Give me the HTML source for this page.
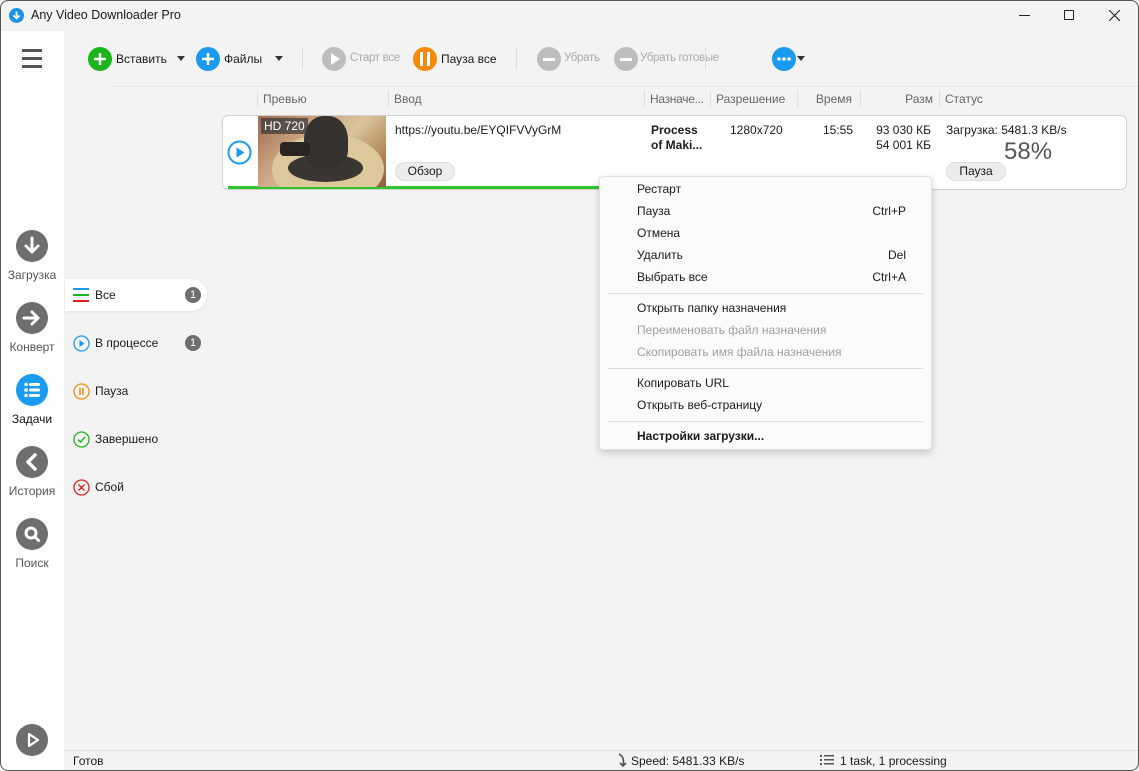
<!DOCTYPE html>
<html><head><meta charset="utf-8"><style>
*{box-sizing:border-box;margin:0;padding:0}
body{width:1139px;height:771px;overflow:hidden;background:#f3f3f3;font-family:"Liberation Sans",sans-serif;font-size:12px;color:#1a1a1a;position:relative}
.a{position:absolute;white-space:nowrap}
.win{position:absolute;left:0;top:0;width:1139px;height:771px;overflow:hidden;background:#f3f3f3}
.frame{position:absolute;left:0;top:0;width:1139px;height:771px;border:1px solid #555;border-radius:8px;pointer-events:none}
.circ{position:absolute;border-radius:50%}
.mi{position:absolute;left:37px;font-size:12px}
.sc{position:absolute;right:25px;font-size:12px}
.sep{position:absolute;left:8px;right:8px;height:1px;background:#dcdcdc}
.hdr{position:absolute;top:90px;height:18px;border-left:1px solid #e0e0e0;color:#666;font-size:12px;padding-left:5px;line-height:18px}
.dis{color:#aaa;font-size:11.5px;letter-spacing:-0.3px}
</style></head><body>
<div class="win">
<div class="circ" style="left:9px;top:8px;width:15px;height:15px;background:#1e90e8"></div>
<svg class="a" style="left:9px;top:8px" width="15" height="15"><path d="M7.5 3.5v7M4.5 7.5l3 3 3-3" stroke="#fff" stroke-width="1.8" fill="none"/></svg>
<div class="a" style="left:31px;top:8px;font-size:12.5px">Any Video Downloader Pro</div>
<div class="a" style="left:1019px;top:15px;width:11px;height:1px;background:#222"></div>
<div class="a" style="left:1064px;top:10px;width:10px;height:10px;border:1px solid #222;border-radius:1px"></div>
<svg class="a" style="left:1109px;top:10px" width="11" height="11"><path d="M0 0L11 11M11 0L0 11" stroke="#222" stroke-width="1.1"/></svg>

<div class="a" style="left:0;top:31px;width:64px;height:740px;background:#fff"></div>
<div class="a" style="left:22px;top:49px;width:20px;height:3px;background:#555"></div>
<div class="a" style="left:22px;top:57px;width:20px;height:3px;background:#555"></div>
<div class="a" style="left:22px;top:65px;width:20px;height:3px;background:#555"></div>

<div class="circ" style="left:16px;top:230px;width:32px;height:32px;background:#6e6e6e"></div>
<svg class="a" style="left:16px;top:230px" width="32" height="32"><path d="M16 8v14M10 16l6 6 6-6" stroke="#fff" stroke-width="3" fill="none" stroke-linecap="round" stroke-linejoin="round"/></svg>
<div class="a" style="left:0;top:268px;width:64px;text-align:center;color:#555">Загрузка</div>
<div class="circ" style="left:16px;top:302px;width:32px;height:32px;background:#6e6e6e"></div>
<svg class="a" style="left:16px;top:302px" width="32" height="32"><path d="M8 16h14M16 10l6 6-6 6" stroke="#fff" stroke-width="3" fill="none" stroke-linecap="round" stroke-linejoin="round"/></svg>
<div class="a" style="left:0;top:340px;width:64px;text-align:center;color:#555">Конверт</div>
<div class="circ" style="left:16px;top:374px;width:32px;height:32px;background:#1a9af0"></div>
<svg class="a" style="left:16px;top:374px" width="32" height="32"><g fill="#fff"><circle cx="10" cy="10.5" r="1.8"/><circle cx="10" cy="16" r="1.8"/><circle cx="10" cy="21.5" r="1.8"/><rect x="13" y="9" width="11" height="3" rx="1.5"/><rect x="13" y="14.5" width="11" height="3" rx="1.5"/><rect x="13" y="20" width="11" height="3" rx="1.5"/></g></svg>
<div class="a" style="left:0;top:412px;width:64px;text-align:center;color:#111">Задачи</div>
<div class="circ" style="left:16px;top:446px;width:32px;height:32px;background:#6e6e6e"></div>
<svg class="a" style="left:16px;top:446px" width="32" height="32"><path d="M19 9l-7 7 7 7" stroke="#fff" stroke-width="3.5" fill="none" stroke-linecap="round" stroke-linejoin="round"/></svg>
<div class="a" style="left:0;top:484px;width:64px;text-align:center;color:#555">История</div>
<div class="circ" style="left:16px;top:518px;width:32px;height:32px;background:#6e6e6e"></div>
<svg class="a" style="left:16px;top:518px" width="32" height="32"><circle cx="15" cy="15" r="5" stroke="#fff" stroke-width="3" fill="none"/><path d="M18.5 18.5l4 4" stroke="#fff" stroke-width="3" stroke-linecap="round"/></svg>
<div class="a" style="left:0;top:556px;width:64px;text-align:center;color:#555">Поиск</div>
<div class="circ" style="left:16px;top:724px;width:32px;height:32px;background:#6e6e6e"></div>
<svg class="a" style="left:16px;top:724px" width="32" height="32"><path d="M13 10l9 6-9 6z" stroke="#fff" stroke-width="2.2" fill="none" stroke-linejoin="round"/></svg>

<div class="circ" style="left:88px;top:47px;width:24px;height:24px;background:#1cb61c"></div>
<svg class="a" style="left:88px;top:47px" width="24" height="24"><path d="M12 6v12M6 12h12" stroke="#fff" stroke-width="2.5"/></svg>
<div class="a" style="left:116px;top:52px">Вставить</div>
<svg class="a" style="left:177px;top:56px" width="9" height="6"><path d="M0 0h8L4 5z" fill="#333"/></svg>
<div class="circ" style="left:196px;top:47px;width:24px;height:24px;background:#1a9af0"></div>
<svg class="a" style="left:196px;top:47px" width="24" height="24"><path d="M12 6v12M6 12h12" stroke="#fff" stroke-width="2.5"/></svg>
<div class="a" style="left:224px;top:52px">Файлы</div>
<svg class="a" style="left:275px;top:56px" width="9" height="6"><path d="M0 0h8L4 5z" fill="#333"/></svg>
<div class="a" style="left:302px;top:48px;width:1px;height:22px;background:#ddd"></div>
<div class="circ" style="left:322px;top:47px;width:24px;height:24px;background:#bdbdbd"></div>
<svg class="a" style="left:322px;top:47px" width="24" height="24"><path d="M9 6l9 6-9 6z" fill="#fff"/></svg>
<div class="a dis" style="left:350px;top:52px">Старт все</div>
<div class="circ" style="left:413px;top:47px;width:24px;height:24px;background:#f58a0a"></div>
<div class="a" style="left:420px;top:52px;width:3px;height:14px;background:#fff"></div>
<div class="a" style="left:427px;top:52px;width:3px;height:14px;background:#fff"></div>
<div class="a" style="left:441px;top:52px">Пауза все</div>
<div class="a" style="left:516px;top:48px;width:1px;height:22px;background:#ddd"></div>
<div class="circ" style="left:537px;top:47px;width:24px;height:24px;background:#bdbdbd"></div>
<div class="a" style="left:543px;top:58px;width:12px;height:3px;background:#fff"></div>
<div class="a dis" style="left:564px;top:52px">Убрать</div>
<div class="circ" style="left:614px;top:47px;width:24px;height:24px;background:#bdbdbd"></div>
<div class="a" style="left:620px;top:58px;width:12px;height:3px;background:#fff"></div>
<div class="a dis" style="left:640px;top:52px">Убрать готовые</div>
<div class="a" style="left:705px;top:48px;width:1px;height:22px;background:#ddd"></div>
<div class="circ" style="left:772px;top:47px;width:24px;height:24px;background:#1a9af0"></div>
<svg class="a" style="left:772px;top:47px" width="24" height="24"><g fill="#fff"><circle cx="7" cy="12" r="1.8"/><circle cx="12" cy="12" r="1.8"/><circle cx="17" cy="12" r="1.8"/></g></svg>
<svg class="a" style="left:797px;top:56px" width="9" height="6"><path d="M0 0h8L4 5z" fill="#333"/></svg>
<div class="a" style="left:112px;top:86px;width:1027px;height:1px;background:#e6e6e6"></div>

<div class="a" style="left:65px;top:279px;width:142px;height:32px;background:#fff;border-radius:0 16px 16px 0;box-shadow:0 1px 2px rgba(0,0,0,.08)"></div>
<div class="a" style="left:73px;top:288px;width:16px;height:2px;background:#1a9af0"></div>
<div class="a" style="left:73px;top:294px;width:16px;height:2px;background:#1cb61c"></div>
<div class="a" style="left:73px;top:300px;width:16px;height:2px;background:#e02020"></div>
<div class="a" style="left:95px;top:288px">Все</div>
<div class="circ" style="left:185px;top:287px;width:16px;height:16px;background:#6e6e6e;color:#fff;font-size:11px;text-align:center;line-height:16px">1</div>
<svg class="a" style="left:73px;top:335px" width="17" height="17"><circle cx="8.5" cy="8.5" r="7.5" stroke="#1a9af0" stroke-width="1.3" fill="none"/><path d="M6.5 5l5 3.5-5 3.5z" fill="#1a9af0"/></svg>
<div class="a" style="left:95px;top:336px">В процессе</div>
<div class="circ" style="left:185px;top:335px;width:16px;height:16px;background:#6e6e6e;color:#fff;font-size:11px;text-align:center;line-height:16px">1</div>
<svg class="a" style="left:73px;top:383px" width="17" height="17"><circle cx="8.5" cy="8.5" r="7.5" stroke="#f58a0a" stroke-width="1.3" fill="none"/><path d="M7 5v7M10 5v7" stroke="#f58a0a" stroke-width="1.5"/></svg>
<div class="a" style="left:95px;top:384px">Пауза</div>
<svg class="a" style="left:73px;top:431px" width="17" height="17"><circle cx="8.5" cy="8.5" r="7.5" stroke="#1cb61c" stroke-width="1.3" fill="none"/><path d="M5 8.5l2.5 2.5 4.5-5" stroke="#1cb61c" stroke-width="1.5" fill="none"/></svg>
<div class="a" style="left:95px;top:432px">Завершено</div>
<svg class="a" style="left:73px;top:479px" width="17" height="17"><circle cx="8.5" cy="8.5" r="7.5" stroke="#e02020" stroke-width="1.3" fill="none"/><path d="M5.5 5.5l6 6M11.5 5.5l-6 6" stroke="#e02020" stroke-width="1.4"/></svg>
<div class="a" style="left:95px;top:480px">Сбой</div>

<div class="hdr" style="left:257px;width:131px">Превью</div>
<div class="hdr" style="left:388px;width:256px">Ввод</div>
<div class="hdr" style="left:644px;width:66px;letter-spacing:-0.3px">Назначе...</div>
<div class="hdr" style="left:710px;width:87px">Разрешение</div>
<div class="hdr" style="left:797px;width:63px;text-align:right;padding-right:8px">Время</div>
<div class="hdr" style="left:860px;width:79px;text-align:right;padding-right:6px">Разм</div>
<div class="hdr" style="left:939px;width:190px">Статус</div>

<div class="a" style="left:222px;top:115px;width:905px;height:75px;background:#fff;border:1.5px solid #cfcfcf;border-radius:6px"></div>
<div class="a" style="left:228px;top:186px;width:518px;height:3px;background:#2ec52e"></div>
<svg class="a" style="left:227px;top:140px" width="25" height="25"><circle cx="12.5" cy="12.5" r="11" stroke="#1a9af0" stroke-width="2" fill="#fff"/><path d="M9.5 7.5l8 5-8 5z" fill="#1a9af0"/></svg>
<div class="a" style="left:258px;top:116px;width:128px;height:71px;overflow:hidden;background:linear-gradient(135deg,#9a6a4e 0%,#c9a07e 30%,#d9c59b 55%,#b58b5e 80%,#8c5d3e 100%)">
<div class="a" style="left:14px;top:18px;width:112px;height:70px;border-radius:50%;background:#dcc89a"></div>
<div class="a" style="left:30px;top:38px;width:75px;height:28px;border-radius:50%;background:#3a3633"></div>
<div class="a" style="left:46px;top:0px;width:44px;height:52px;border-radius:45% 45% 35% 35%;background:#35312e"></div>
<div class="a" style="left:22px;top:26px;width:30px;height:14px;background:#2a2522;border-radius:4px"></div>
</div>
<div class="a" style="left:261px;top:118px;background:rgba(60,60,60,.75);color:#fff;padding:1px 3px;font-size:12px">HD 720</div>
<div class="a" style="left:395px;top:123px">https://youtu.be/EYQIFVVyGrM</div>
<div class="a" style="left:395px;top:162px;width:60px;height:19px;background:#ececec;border:1px solid #ddd;border-radius:10px;text-align:center;line-height:17px">Обзор</div>
<div class="a" style="left:651px;top:123px;font-weight:bold;line-height:15px">Process<br>of Maki...</div>
<div class="a" style="left:730px;top:123px">1280x720</div>
<div class="a" style="left:823px;top:123px">15:55</div>
<div class="a" style="left:870px;top:123px;width:61px;text-align:right;line-height:15px">93 030 КБ<br>54 001 КБ</div>
<div class="a" style="left:946px;top:123px">Загрузка: 5481.3 KB/s</div>
<div class="a" style="left:1004px;top:138px;font-size:24px;color:#555">58%</div>
<div class="a" style="left:946px;top:162px;width:60px;height:19px;background:#ececec;border:1px solid #ddd;border-radius:10px;text-align:center;line-height:17px">Пауза</div>

<div class="a" style="left:599px;top:176px;width:333px;height:274px;background:#fbfbfb;border:1px solid #e2e2e2;border-radius:4px;box-shadow:0 3px 8px rgba(0,0,0,.18)">
<div class="mi" style="top:5px">Рестарт</div>
<div class="mi" style="top:27px">Пауза</div><div class="sc" style="top:27px">Ctrl+P</div>
<div class="mi" style="top:49px">Отмена</div>
<div class="mi" style="top:71px">Удалить</div><div class="sc" style="top:71px">Del</div>
<div class="mi" style="top:93px">Выбрать все</div><div class="sc" style="top:93px">Ctrl+A</div>
<div class="sep" style="top:116px"></div>
<div class="mi" style="top:124px">Открыть папку назначения</div>
<div class="mi" style="top:146px;color:#a0a0a0">Переименовать файл назначения</div>
<div class="mi" style="top:168px;color:#a0a0a0">Скопировать имя файла назначения</div>
<div class="sep" style="top:191px"></div>
<div class="mi" style="top:199px">Копировать URL</div>
<div class="mi" style="top:221px">Открыть веб-страницу</div>
<div class="sep" style="top:244px"></div>
<div class="mi" style="top:252px;font-weight:bold">Настройки загрузки...</div>
</div>

<div class="a" style="left:64px;top:750px;width:1075px;height:1px;background:#e2e2e2"></div>
<div class="a" style="left:73px;top:754px">Готов</div>
<svg class="a" style="left:616px;top:753px" width="12" height="15"><path d="M3 1q6 3 4 11M4 10l3 3 3-3" stroke="#555" stroke-width="1.6" fill="none"/></svg>
<div class="a" style="left:631px;top:754px">Speed: 5481.33 KB/s</div>
<svg class="a" style="left:820px;top:754px" width="14" height="12"><g fill="#555"><rect x="0" y="1" width="2" height="2"/><rect x="4" y="1" width="10" height="1.5"/><rect x="0" y="5" width="2" height="2"/><rect x="4" y="5" width="10" height="1.5"/><rect x="0" y="9" width="2" height="2"/><rect x="4" y="9" width="10" height="1.5"/></g></svg>
<div class="a" style="left:840px;top:754px">1 task, 1 processing</div>
</div>
<div class="frame"></div>
</body></html>
